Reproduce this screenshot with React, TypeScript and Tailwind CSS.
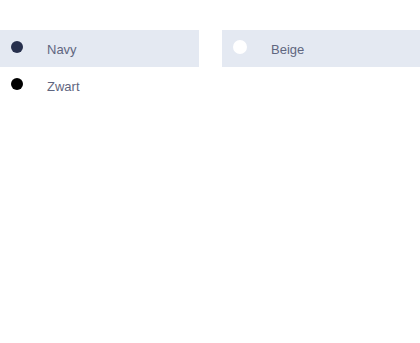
import React from 'react';

const colors = [
  { name: 'Navy', swatch: 'h-3 w-3 bg-[#27304d]', active: true },
  { name: 'Beige', swatch: 'h-[14px] w-[14px] bg-white', active: true },
  { name: 'Zwart', swatch: 'h-3 w-3 bg-black', active: false },
];

const App: React.FC = () => {
  return (
    <div className="min-h-screen bg-white pt-[30px] font-['Liberation_Sans',Arial,sans-serif]">
      <div className="grid grid-cols-[199px_1fr] gap-x-[23px]">
        {colors.map((c) => (
          <div
            key={c.name}
            className={`flex h-[37px] items-center pl-[11px] ${c.active ? 'bg-[#e4e9f2]' : ''}`}
          >
            <span className={`mb-[4px] block shrink-0 rounded-full ${c.swatch}`} />
            <span className="ml-6 mt-[2px] text-[13px] text-[#5f6680]">{c.name}</span>
          </div>
        ))}
      </div>
    </div>
  );
};

export default App;
